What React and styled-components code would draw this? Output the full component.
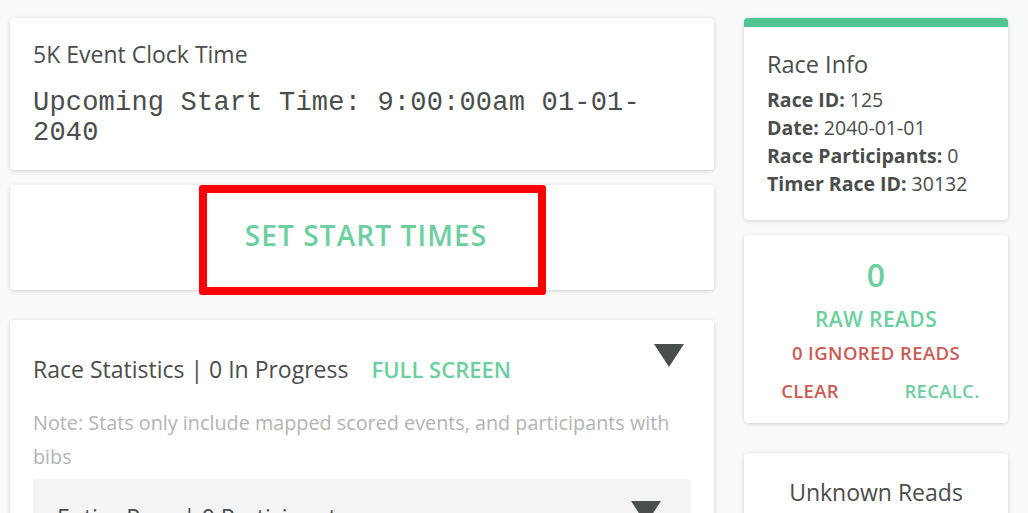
import React from "react";
import styled, { createGlobalStyle } from "styled-components";

const GlobalStyle = createGlobalStyle`
  body {
    margin: 0;
    background: #f8f9fb;
    font-family: "Open Sans", "Noto Sans", sans-serif;
    color: #4a4d4c;
  }
`;

const GREEN = "#6ccf9f";
const RED = "#cc5a55";

const App = () => {
  return (
    <>
      <GlobalStyle />
      <Page>
        <LeftColumn>
          <ClockCard>
            <CardTitle>5K Event Clock Time</CardTitle>
            <ClockText>Upcoming Start Time: 9:00:00am 01-01-2040</ClockText>
          </ClockCard>

          <ButtonCard>
            <StartButton>SET START TIMES</StartButton>
            <Highlight />
          </ButtonCard>

          <StatsCard>
            <StatsHeader>
              <CardTitle>
                Race Statistics | 0 In Progress
                <LinkText>FULL SCREEN</LinkText>
              </CardTitle>
              <Caret />
            </StatsHeader>
            <Note>
              Note: Stats only include mapped scored events, and participants with
              bibs
            </Note>
            <SubPanel>
              <SubHeader>
                <SubTitle>Entire Race | 0 Participants</SubTitle>
                <Caret $small />
              </SubHeader>
            </SubPanel>
          </StatsCard>
        </LeftColumn>

        <RightColumn>
          <InfoCard>
            <InfoTitle>Race Info</InfoTitle>
            <InfoLine><b>Race ID:</b> 125</InfoLine>
            <InfoLine><b>Date:</b> 2040-01-01</InfoLine>
            <InfoLine><b>Race Participants:</b> 0</InfoLine>
            <InfoLine><b>Timer Race ID:</b> 30132</InfoLine>
          </InfoCard>

          <ReadsCard>
            <BigCount>0</BigCount>
            <ReadsLabel $color={GREEN}>RAW READS</ReadsLabel>
            <ReadsLabel $color={RED} $small>0 IGNORED READS</ReadsLabel>
            <ActionRow>
              <ActionButton $color={RED}>CLEAR</ActionButton>
              <ActionButton $color={GREEN}>RECALC.</ActionButton>
            </ActionRow>
          </ReadsCard>

          <UnknownCard>
            <UnknownTitle>Unknown Reads</UnknownTitle>
          </UnknownCard>
        </RightColumn>
      </Page>
    </>
  );
};

// Styled components
const Page = styled.div`
  display: grid;
  grid-template-columns: 704px 264px;
  column-gap: 30px;
  padding: 18px 20px 0 10px;
  align-items: start;
`;

const LeftColumn = styled.div`
  display: flex;
  flex-direction: column;
`;

const RightColumn = styled.div`
  display: flex;
  flex-direction: column;
`;

const Card = styled.div`
  position: relative;
  background: #ffffff;
  border-radius: 4px;
  box-shadow: 0 1px 4px rgba(0, 0, 0, 0.16);
  padding: 20px 23px 24px;
`;

const ClockCard = styled(Card)`
  height: 152px;
  box-sizing: border-box;
`;

const CardTitle = styled.div`
  font-size: 23px;
  line-height: 32px;
  color: #4a4d4c;
`;

const ClockText = styled.div`
  margin-top: 18px;
  font-family: "Liberation Mono", "DejaVu Sans Mono", monospace;
  font-size: 27px;
  letter-spacing: 0.2px;
  line-height: 30px;
  color: #4a4d4c;
  width: 630px;
`;

const ButtonCard = styled(Card)`
  margin-top: 15px;
  height: 105px;
  box-sizing: border-box;
  padding: 0;
  display: flex;
  align-items: center;
  justify-content: center;
`;

const StartButton = styled.button`
  background: none;
  border: none;
  padding: 0;
  margin-left: 8px;
  margin-top: -6px;
  font-family: "Open Sans", sans-serif;
  font-weight: 600;
  font-size: 28px;
  letter-spacing: 1.1px;
  color: ${GREEN};
  cursor: pointer;
`;

const Highlight = styled.div`
  position: absolute;
  left: 189px;
  top: 0;
  width: 347px;
  height: 110px;
  box-sizing: border-box;
  border: 8px solid #ff0000;
  border-radius: 3px;
  pointer-events: none;
`;

const StatsCard = styled(Card)`
  margin-top: 30px;
  padding-top: 22px;
`;

const StatsHeader = styled.div`
  display: flex;
  justify-content: space-between;
  align-items: flex-start;
  padding-top: 11px;
`;

const LinkText = styled.span`
  margin-left: 23px;
  font-size: 22px;
  font-weight: 600;
  color: ${GREEN};
`;

const Caret = styled.div`
  width: 0;
  height: 0;
  margin-top: ${(p) => (p.$small ? "0" : "-9px")};
  margin-right: ${(p) => (p.$small ? "6px" : "7px")};
  border-left: 15px solid transparent;
  border-right: 15px solid transparent;
  border-top: 23px solid #4a4e4d;
`;

const Note = styled.p`
  margin: 21px 0 0;
  font-size: 19.8px;
  line-height: 34px;
  color: #b3b3b3;
`;

const SubPanel = styled.div`
  margin-top: 5px;
  background: #f4f4f4;
  border-radius: 4px;
  padding: 22px 24px 40px;
  height: 120px;
`;

const SubHeader = styled.div`
  display: flex;
  justify-content: space-between;
  align-items: flex-start;
`;

const SubTitle = styled.div`
  font-size: 23px;
  line-height: 32px;
  color: #4a4d4c;
`;

const InfoCard = styled(Card)`
  border-top: 9px solid #52c393;
  padding: 20px 23px 22px;
`;

const InfoTitle = styled.div`
  font-size: 23.5px;
  line-height: 34px;
  margin-bottom: 5px;
  color: #4a4d4c;
`;

const InfoLine = styled.div`
  font-size: 19.5px;
  line-height: 28px;
  color: #4a4d4c;

  b {
    font-weight: 700;
  }
`;

const ReadsCard = styled(Card)`
  margin-top: 15px;
  height: 188px;
  box-sizing: border-box;
  padding: 18px 0 0;
  display: flex;
  flex-direction: column;
  align-items: center;
`;

const BigCount = styled.div`
  font-size: 32px;
  font-weight: 600;
  line-height: 44px;
  color: ${GREEN};
`;

const ReadsLabel = styled.div`
  margin-top: ${(p) => (p.$small ? "6px" : "8px")};
  font-size: ${(p) => (p.$small ? "18.5px" : "21px")};
  letter-spacing: 0.4px;
  font-weight: 600;
  line-height: 28px;
  color: ${(p) => p.$color};
`;

const ActionRow = styled.div`
  margin-top: 10px;
  width: 100%;
  display: grid;
  grid-template-columns: 1fr 1fr;
  justify-items: center;
`;

const ActionButton = styled.button`
  background: none;
  border: none;
  padding: 0;
  font-family: "Open Sans", sans-serif;
  font-size: 18.5px;
  letter-spacing: 0.3px;
  font-weight: 600;
  line-height: 28px;
  color: ${(p) => p.$color};
  cursor: pointer;
`;

const UnknownCard = styled(Card)`
  margin-top: 30px;
  padding: 22px 0 60px;
  text-align: center;
`;

const UnknownTitle = styled.div`
  font-size: 23px;
  font-weight: 500;
  line-height: 34px;
  color: #4a4d4c;
`;

export default App;
